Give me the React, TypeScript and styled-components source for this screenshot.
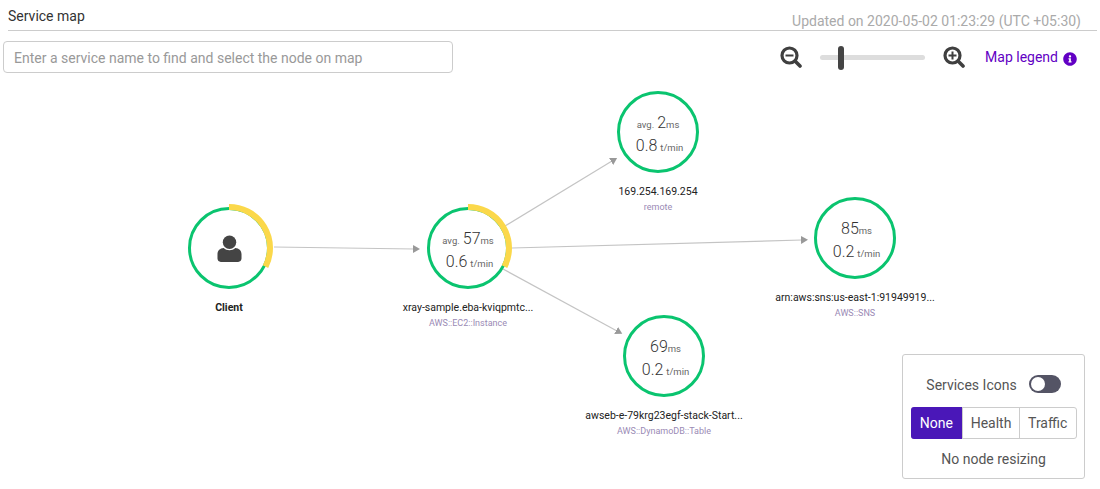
import React from "react";
import styled, { createGlobalStyle } from "styled-components";
import { FaInfoCircle } from "react-icons/fa";

const Global = createGlobalStyle`
  html, body { margin: 0; padding: 0; background: #fff; }
  body { font-family: Roboto, "Liberation Sans", sans-serif; color: #333; }
  * { box-sizing: border-box; }
`;

const Page = styled.div`
  width: 1100px;
  height: 489px;
  display: flex;
  flex-direction: column;
  overflow: hidden;
`;

const Header = styled.header`
  height: 31px;
  margin: 0 3px 0 8px;
  padding: 0 16px 0 0;
  display: flex;
  justify-content: space-between;
  border-bottom: 1px solid #ccc;
`;

const Title = styled.h1`
  margin: 7px 0 0;
  font-size: 14px;
  line-height: 18px;
  font-weight: 400;
  color: #333;
`;

const Updated = styled.span`
  margin-top: 12px;
  font-size: 14px;
  line-height: 18px;
  color: #aaa;
`;

const Toolbar = styled.div`
  height: 32px;
  margin-top: 10px;
  padding: 0 23px 0 3px;
  display: flex;
  align-items: center;
`;

const Search = styled.input`
  width: 450px;
  height: 32px;
  padding: 1px 10px 0;
  border: 1px solid #ccc;
  border-radius: 4px;
  font-family: inherit;
  font-size: 14px;
  outline: none;
  &::placeholder { color: #999; opacity: 1; }
`;

const Zoom = styled.div`
  margin-left: auto;
  display: flex;
  align-items: center;
  gap: 18px;
  color: #444;
`;

const Track = styled.div`
  width: 105px;
  height: 5px;
  margin-top: 1px;
  border-radius: 3px;
  background: #ddd;
  display: flex;
  align-items: center;
  padding-left: 18px;
`;

const Thumb = styled.div`
  flex: none;
  width: 6px;
  height: 24px;
  border-radius: 3px;
  background: #444;
`;

const Legend = styled.a`
  margin-left: 20px;
  display: flex;
  align-items: center;
  gap: 5px;
  font-size: 14px;
  color: #6200c4;
  svg { margin-top: 3px; }
`;

const Canvas = styled.main`
  position: relative;
  flex: 1;
  margin-top: 7px;
`;

const Edges = styled.svg`
  position: absolute;
  left: 0;
  top: 0;
  width: 1100px;
  height: 409px;
`;

const NodeBox = styled.div<{ $x: number; $y: number }>`
  position: absolute;
  left: ${(p) => p.$x}px;
  top: ${(p) => p.$y}px;
  width: 200px;
  margin-left: -100px;
  display: flex;
  flex-direction: column;
  align-items: center;
`;

const Ring = styled.div`
  position: relative;
  width: 82px;
  height: 82px;
  border: 3px solid #0ac46f;
  border-radius: 50%;
  padding-top: 4px;
  display: flex;
  flex-direction: column;
  align-items: center;
  justify-content: center;
  gap: 1px;
`;

const IconRing = styled(Ring)`
  padding-top: 0;
`;

const Arc = styled.svg`
  position: absolute;
  left: -3px;
  top: -3px;
  width: 90px;
  height: 90px;
  overflow: visible;
`;

const Metric = styled.div`
  line-height: 22px;
  height: 22px;
  color: #666;
  font-size: 9.5px;
  white-space: nowrap;
`;

const Big = styled.span`
  font-size: 16px;
  font-weight: 300;
  margin: 0 0 0 3px;
  color: #333;
`;

const Unit = styled.span`
  font-size: 9.5px;
  color: #666;
`;

const Rate = styled.span`
  margin-left: 3px;
  font-size: 9.5px;
  color: #666;
`;

const Label = styled.div<{ $strong?: boolean }>`
  margin-top: 12px;
  font-size: 10.5px;
  line-height: 14px;
  color: #222;
  font-weight: ${(p) => (p.$strong ? 700 : 400)};
  white-space: nowrap;
`;

const Sub = styled.div`
  margin-top: 2px;
  font-size: 9px;
  line-height: 12px;
  color: #9a8ab5;
  white-space: nowrap;
`;

const Panel = styled.aside`
  position: absolute;
  left: 902px;
  top: 274px;
  width: 183px;
  height: 125px;
  border: 1px solid #ccc;
  border-radius: 3px;
  padding: 20px 8px 0;
  display: flex;
  flex-direction: column;
  align-items: center;
`;

const ToggleRow = styled.div`
  height: 18px;
  display: flex;
  align-items: center;
  gap: 12px;
  font-size: 14px;
  color: #555;
`;

const ToggleText = styled.span`
  padding-top: 2px;
`;

const Toggle = styled.span`
  position: relative;
  width: 32px;
  height: 18px;
  border-radius: 9px;
  background: #545465;
  &::after {
    content: "";
    position: absolute;
    left: 2px;
    top: 2px;
    width: 14px;
    height: 14px;
    border-radius: 50%;
    background: #fff;
  }
`;

const Segments = styled.div`
  margin-top: 14px;
  width: 166px;
  height: 32px;
  display: flex;
  border: 1px solid #ccc;
  border-radius: 3px;
`;

const Segment = styled.span<{ $active?: boolean; $w: number }>`
  width: ${(p) => p.$w}px;
  margin: ${(p) => (p.$active ? "-1px 0 -1px -1px" : "0")};
  border-radius: ${(p) => (p.$active ? "3px 0 0 3px" : "0")};
  display: flex;
  align-items: center;
  justify-content: center;
  font-size: 14px;
  color: ${(p) => (p.$active ? "#fff" : "#555")};
  background: ${(p) => (p.$active ? "#4a17b8" : "transparent")};
  & + & { border-left: 1px solid #ccc; }
`;

const Resize = styled.div`
  margin-top: 11px;
  font-size: 14px;
  line-height: 18px;
  color: #555;
`;

const ZoomIcon = ({ plus }: { plus?: boolean }) => (
  <svg width="22" height="22" viewBox="0 0 22 22" fill="none" stroke="#3f3f3f">
    <circle cx="9.500" cy="9.500" r="7.500" strokeWidth="3.200" />
    <path d="M15 15l5 5" strokeWidth="3.600" strokeLinecap="round" />
    <path d={plus ? "M5.500 9.500h8M9.500 5.500v8" : "M5.500 9.500h8"} strokeWidth="2" />
  </svg>
);

const UserIcon = () => (
  <svg width="25" height="27" viewBox="0 0 26 28" fill="#444">
    <circle cx="13" cy="7.500" r="7" />
    <path d="M7 13.500c1.600 1.500 3.600 2.300 6 2.300s4.400-.8 6-2.300c4 .2 6.500 2.800 6.500 6.500v4.500c0 2-1.500 3.500-3.500 3.500H4c-2 0-3.500-1.500-3.500-3.500V20c0-3.700 2.500-6.300 6.500-6.500z" />
  </svg>
);

const YellowArc = ({ to }: { to: number }) => {
  const r = 41;
  const c = 41;
  const a = (to * Math.PI) / 180;
  const x = c + r * Math.sin(a);
  const y = c - r * Math.cos(a);
  return (
    <Arc viewBox="0 0 90 90">
      <path
        d={`M${c} ${c - r}A${r} ${r} 0 0 1 ${x.toFixed(2)} ${y.toFixed(2)}`}
        fill="none"
        stroke="#fbd84a"
        strokeWidth="6"
      />
    </Arc>
  );
};

const edges = [
  [274, 167, 414, 169],
  [505, 146, 612, 81],
  [512, 168, 802, 160],
  [503, 189, 617, 251],
];

export default function App() {
  return (
    <Page>
      <Global />
      <Header>
        <Title>Service map</Title>
        <Updated>Updated on 2020-05-02 01:23:29 (UTC +05:30)</Updated>
      </Header>
      <Toolbar>
        <Search placeholder="Enter a service name to find and select the node on map" />
        <Zoom>
          <ZoomIcon />
          <Track>
            <Thumb />
          </Track>
          <ZoomIcon plus />
        </Zoom>
        <Legend>
          Map legend <FaInfoCircle size={14} />
        </Legend>
      </Toolbar>
      <Canvas>
        <Edges viewBox="0 0 1100 409">
          <defs>
            <marker id="tip" markerWidth="8" markerHeight="8" refX="1" refY="4" orient="auto" markerUnits="userSpaceOnUse">
              <path d="M0 0L7 4L0 8z" fill="#999" />
            </marker>
          </defs>
          {edges.map(([a, b, c, d]) => (
            <line key={`${a}-${b}-${c}`} x1={a} y1={b} x2={c} y2={d} stroke="#c4c4c4" strokeWidth="1.200" markerEnd="url(#tip)" />
          ))}
        </Edges>

        <NodeBox $x={229} $y={127}>
          <IconRing>
            <YellowArc to={117} />
            <UserIcon />
          </IconRing>
          <Label $strong>Client</Label>
        </NodeBox>

        <NodeBox $x={468} $y={127}>
          <Ring>
            <YellowArc to={117} />
            <Metric>avg.<Big>57</Big><Unit>ms</Unit></Metric>
            <Metric><Big>0.6</Big><Rate>t/min</Rate></Metric>
          </Ring>
          <Label>xray-sample.eba-kviqpmtc...</Label>
          <Sub>AWS::EC2::Instance</Sub>
        </NodeBox>

        <NodeBox $x={658} $y={11}>
          <Ring>
            <Metric>avg.<Big>2</Big><Unit>ms</Unit></Metric>
            <Metric><Big>0.8</Big><Rate>t/min</Rate></Metric>
          </Ring>
          <Label>169.254.169.254</Label>
          <Sub>remote</Sub>
        </NodeBox>

        <NodeBox $x={855} $y={117}>
          <Ring>
            <Metric><Big>85</Big><Unit>ms</Unit></Metric>
            <Metric><Big>0.2</Big><Rate>t/min</Rate></Metric>
          </Ring>
          <Label>arn:aws:sns:us-east-1:91949919...</Label>
          <Sub>AWS::SNS</Sub>
        </NodeBox>

        <NodeBox $x={664} $y={235}>
          <Ring>
            <Metric><Big>69</Big><Unit>ms</Unit></Metric>
            <Metric><Big>0.2</Big><Rate>t/min</Rate></Metric>
          </Ring>
          <Label>awseb-e-79krg23egf-stack-Start...</Label>
          <Sub>AWS::DynamoDB::Table</Sub>
        </NodeBox>

        <Panel>
          <ToggleRow>
            <ToggleText>Services Icons</ToggleText>
            <Toggle />
          </ToggleRow>
          <Segments>
            <Segment $active $w={52}>None</Segment>
            <Segment $w={57}>Health</Segment>
            <Segment $w={57}>Traffic</Segment>
          </Segments>
          <Resize>No node resizing</Resize>
        </Panel>
      </Canvas>
    </Page>
  );
}
